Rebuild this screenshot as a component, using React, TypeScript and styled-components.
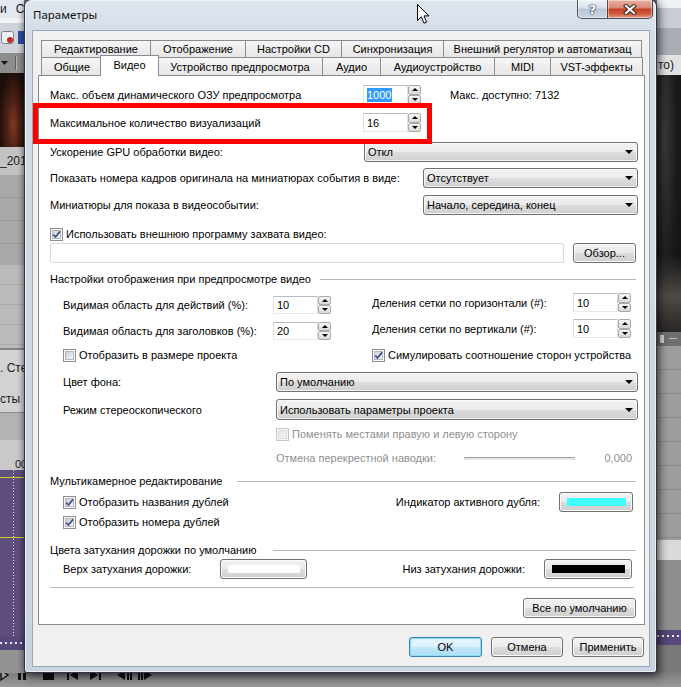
import React from "react";
import styled, { createGlobalStyle, css } from "styled-components";

const GlobalStyle = createGlobalStyle`
  html, body { margin: 0; padding: 0; }
  body { background: #7a7a7a; font-family: "Liberation Sans", Arial, sans-serif; }
`;

/* ---------- desktop / background application ---------- */

const Desktop = styled.div`
  position: relative;
  width: 681px;
  height: 687px;
  overflow: hidden;
  display: flex;
  flex-direction: column;
  background: #8a8a8a;
`;

const AppArea = styled.div`
  height: 673px;
  flex: none;
  display: flex;
`;

const Strip = styled.div<{ $w: number }>`
  width: ${(p) => p.$w}px;
  flex: none;
  display: flex;
  flex-direction: column;
`;

const Filler = styled.div`
  flex: 1;
  background: #777;
`;

const Band = styled.div<{ $h: number; $bg: string; $pl?: number; $end?: boolean }>`
  height: ${(p) => p.$h}px;
  flex: none;
  background: ${(p) => p.$bg};
  color: #1a1a1a;
  font-size: 12px;
  display: flex;
  align-items: ${(p) => (p.$end ? "flex-end" : "center")};
  gap: 9px;
  padding-left: ${(p) => p.$pl ?? 0}px;
  white-space: nowrap;
`;

const BottomBar = styled.div`
  flex: 1;
  background: linear-gradient(#7e7e7e, #9a9a9a);
  display: flex;
  align-items: flex-start;
`;

/* ---------- window ---------- */

const Window = styled.div`
  position: absolute;
  left: 24px;
  top: -1px;
  width: 633px;
  height: 674px;
  box-sizing: border-box;
  border: 1px solid rgba(28, 38, 54, 0.9);
  border-radius: 7px 7px 3px 3px;
  background: linear-gradient(180deg, #dfe6ee 0%, #d2dbe6 40px, #c9d4e0 100%);
  box-shadow: 0 0 6px rgba(0, 0, 0, 0.45), 3px 4px 10px rgba(0, 0, 0, 0.45),
    inset 0 0 0 1px rgba(255, 255, 255, 0.6);
  display: flex;
  flex-direction: column;
  z-index: 5;
`;

const TitleBar = styled.div`
  height: 30px;
  flex: none;
  display: flex;
  align-items: flex-start;
`;

const Title = styled.div`
  margin-left: 8px;
  line-height: 29px;
  font-family: "Noto Sans", "Open Sans", sans-serif;
  font-size: 11.5px;
  color: #111;
`;

const Caption = styled.div`
  margin-left: auto;
  margin-right: 3px;
  display: flex;
  height: 19px;
`;

const CapBtn = styled.div<{ $kind: "help" | "close" }>`
  box-sizing: border-box;
  height: 19px;
  border: 1px solid rgba(40, 50, 70, 0.8);
  border-top: none;
  display: flex;
  align-items: center;
  justify-content: center;
  box-shadow: inset 0 0 0 1px rgba(255, 255, 255, 0.45);
  ${(p) =>
    p.$kind === "help"
      ? css`
          width: 30px;
          border-right: none;
          border-radius: 0 0 0 5px;
          background: linear-gradient(#eef2f7 0%, #d7dfe9 45%, #b6c4d4 52%, #cbd7e4 100%);
        `
      : css`
          width: 46px;
          border-radius: 0 0 5px 0;
          background: linear-gradient(#eab0a2 0%, #da8b75 42%, #c63f24 52%, #cf5c40 78%, #e29d88 100%);
        `}
`;

const HelpGlyph = styled.span`
  font-family: "DejaVu Sans", sans-serif;
  font-weight: bold;
  font-size: 13px;
  color: #fff;
  text-shadow: 0 0 1px #2b3850, 0 0 1px #2b3850, 0 0 2px #2b3850;
`;

const Client = styled.div`
  flex: 1;
  margin: 0 6px 5px 7px;
  border: 1px solid #9aa8b8;
  background: #f0f0f0;
  display: flex;
  flex-direction: column;
`;

/* ---------- tabs ---------- */

const TabArea = styled.div`
  margin: 9px 0 0 8px;
  display: flex;
  flex-direction: column;
  position: relative;
  z-index: 2;
`;

const TabRow = styled.div<{ $h: number }>`
  display: flex;
  height: ${(p) => p.$h}px;
`;

const Tab = styled.div<{ $w: number; $active?: boolean; $last?: boolean }>`
  box-sizing: border-box;
  flex: none;
  width: ${(p) => p.$w}px;
  height: 100%;
  border: 1px solid #898c95;
  border-bottom: none;
  border-right: ${(p) => (p.$last ? "1px solid #898c95" : "none")};
  background: linear-gradient(#f6f6f6, #e6e6e6);
  display: flex;
  align-items: center;
  justify-content: center;
  font-size: 11px;
  color: #000;
  white-space: nowrap;
  overflow: hidden;
  ${(p) =>
    p.$active &&
    css`
      width: ${p.$w + 4}px;
      height: calc(100% + 3px);
      margin: -2px -2px 0;
      border-right: 1px solid #898c95;
      background: #fff;
      padding-bottom: 2px;
      position: relative;
      z-index: 3;
    `}
`;

const Panel = styled.div`
  margin: 0 4px 0 5px;
  border: 1px solid #898c95;
  background: #fff;
  padding: 0 6px 6px 11px;
  display: flex;
  flex-direction: column;
  font-size: 11px;
  color: #000;
`;

/* ---------- form parts ---------- */

const Row = styled.div<{ $mt: number; $h: number; $pl?: number; $pr?: number; $end?: boolean }>`
  display: flex;
  align-items: center;
  flex: none;
  margin-top: ${(p) => p.$mt}px;
  height: ${(p) => p.$h}px;
  padding-left: ${(p) => p.$pl ?? 0}px;
  padding-right: ${(p) => p.$pr ?? 0}px;
  justify-content: ${(p) => (p.$end ? "flex-end" : "flex-start")};
`;

const Cols = styled.div<{ $mt: number }>`
  display: flex;
  margin-top: ${(p) => p.$mt}px;
`;

const Col = styled.div<{ $w?: number; $pt?: number; $pl?: number }>`
  display: flex;
  flex-direction: column;
  ${(p) => (p.$w ? `width: ${p.$w}px; flex: none;` : "flex: 1;")}
  padding-top: ${(p) => p.$pt ?? 0}px;
  padding-left: ${(p) => p.$pl ?? 0}px;
  box-sizing: border-box;
`;

const Label = styled.span<{ $w?: number; $dim?: boolean; $ml?: number; $grow?: boolean; $right?: boolean; $pr?: number }>`
  flex: ${(p) => (p.$grow ? "1" : "none")};
  ${(p) => (p.$w !== undefined ? `width: ${p.$w}px;` : "")}
  margin-left: ${(p) => p.$ml ?? 0}px;
  padding-right: ${(p) => p.$pr ?? 0}px;
  text-align: ${(p) => (p.$right ? "right" : "left")};
  color: ${(p) => (p.$dim ? "#8f8f8f" : "#000")};
  white-space: nowrap;
  overflow: hidden;
`;

const Spacer = styled.span`
  flex: 1;
`;

const SpinWrap = styled.div`
  display: flex;
  height: 100%;
  flex: none;
`;

const NumBox = styled.div`
  width: 45px;
  box-sizing: border-box;
  border: 1px solid;
  border-color: #b5bcc7 #dde1e7 #e3e9ef #dde1e7;
  background: #fff;
  display: flex;
  align-items: center;
  padding-left: 3px;
`;

const Selected = styled.span`
  background: #3399ff;
  color: #fff;
  padding: 1px 1px 1px 0;
`;

const Spin = styled.div`
  width: 13px;
  display: flex;
  flex-direction: column;
`;

const SpinBtn = styled.div<{ $dir: "up" | "down" }>`
  flex: 1;
  box-sizing: border-box;
  border: 1px solid #a9a9a9;
  border-radius: 2px;
  background: linear-gradient(#f6f6f6, #d9d9d9);
  display: flex;
  align-items: center;
  justify-content: center;
  &::after {
    content: "";
    border-left: 3px solid transparent;
    border-right: 3px solid transparent;
    ${(p) => (p.$dir === "up" ? "border-bottom: 3px solid #000;" : "border-top: 3px solid #000;")}
  }
`;

const Combo = styled.div`
  flex: 1;
  height: 100%;
  box-sizing: border-box;
  border: 1px solid #707070;
  border-radius: 3px;
  background: linear-gradient(#f2f2f2 0%, #ebebeb 50%, #dddddd 50%, #cfcfcf 100%);
  box-shadow: inset 0 0 0 1px rgba(255, 255, 255, 0.75);
  display: flex;
  align-items: center;
  padding: 0 4px 0 3px;
  white-space: nowrap;
  &::after {
    content: "";
    margin-left: auto;
    border-left: 4px solid transparent;
    border-right: 4px solid transparent;
    border-top: 4px solid #000;
  }
`;

const PathBox = styled.div`
  flex: 1;
  height: 100%;
  box-sizing: border-box;
  border: 1px solid #d6dadf;
  border-radius: 2px;
  background: #fff;
`;

const Btn = styled.div<{ $w: number; $primary?: boolean; $ml?: number }>`
  width: ${(p) => p.$w}px;
  height: 100%;
  flex: none;
  margin-left: ${(p) => p.$ml ?? 0}px;
  box-sizing: border-box;
  border: 1px solid #707070;
  border-radius: 3px;
  background: linear-gradient(#f2f2f2 0%, #ebebeb 50%, #dddddd 50%, #cfcfcf 100%);
  box-shadow: inset 0 0 0 1px #fbfbfb;
  display: flex;
  align-items: center;
  justify-content: center;
  font-size: 11px;
  color: #000;
  white-space: nowrap;
  ${(p) =>
    p.$primary &&
    css`
      border-color: #3c7fb1;
      background: linear-gradient(#e9f5fc 0%, #dbf0fb 50%, #c2e6f9 50%, #acdcf5 100%);
      box-shadow: inset 0 0 0 1px #8fdcf8, inset 0 0 2px 1px #c8eefc;
    `}
`;

const ColorBtn = styled(Btn)`
  padding: 5px 6px 5px 7px;
  align-items: stretch;
`;

const Swatch = styled.span<{ $c: string }>`
  flex: 1;
  background: ${(p) => p.$c};
`;

const SectionRule = styled.span`
  flex: 1;
  height: 1px;
  background: #b4b9bf;
  margin-right: 2px;
`;

const CheckBox = styled.span<{ $disabled?: boolean }>`
  width: 13px;
  height: 13px;
  flex: none;
  box-sizing: border-box;
  border: 1px solid ${(p) => (p.$disabled ? "#c8c8c8" : "#8e8f8f")};
  background: #f8f8f8;
  display: flex;
  margin-right: 3px;
`;

const Track = styled.span`
  width: 111px;
  height: 3px;
  flex: none;
  box-sizing: border-box;
  border: 1px solid;
  border-color: #a0a0a0 #c8c8c8 #e6e6e6 #c8c8c8;
  background: #e9e9e9;
`;

const ButtonBar = styled.div`
  display: flex;
  justify-content: flex-end;
  gap: 9px;
  height: 20px;
  margin: 12px 5px 0 0;
`;

const Overlay = styled.div`
  position: absolute;
  left: 33px;
  top: 103px;
  width: 399px;
  height: 41px;
  box-sizing: border-box;
  border: 5px solid #ff0000;
  z-index: 10;
`;

const Cursor = styled.svg`
  position: absolute;
  left: 417px;
  top: 4px;
  z-index: 11;
`;

/* ---------- small composed pieces ---------- */

function Check({ on, disabled }: { on?: boolean; disabled?: boolean }) {
  const id = disabled ? "cbd" : "cbg";
  return (
    <CheckBox $disabled={disabled}>
      <svg width="11" height="11" viewBox="0 0 11 11">
        <defs>
          <linearGradient id={id} x1="0" y1="0" x2="1" y2="1">
            <stop offset="0" stopColor={disabled ? "#e6e6e6" : "#c9cdd3"} />
            <stop offset="1" stopColor={disabled ? "#f6f6f6" : "#f7f7f7"} />
          </linearGradient>
        </defs>
        <rect x="1.5" y="1.5" width="8" height="8" fill={`url(#${id})`} stroke={disabled ? "#dadada" : "#b3b8be"} />
        {on && (
          <path d="M2.3 5.6 L4.5 8 L9 2.4" fill="none" stroke="#3f4f8e" strokeWidth="1.7" strokeLinejoin="round" />
        )}
      </svg>
    </CheckBox>
  );
}

function SpinField({ children }: { children: React.ReactNode }) {
  return (
    <SpinWrap>
      <NumBox>{children}</NumBox>
      <Spin>
        <SpinBtn $dir="up" />
        <SpinBtn $dir="down" />
      </Spin>
    </SpinWrap>
  );
}

function Section({ mt, w, children }: { mt: number; w: number; children: React.ReactNode }) {
  return (
    <Row $mt={mt} $h={14}>
      <Label $w={w}>{children}</Label>
      <SectionRule />
    </Row>
  );
}

const tabsBack = [
  { t: "Редактирование", w: 109 },
  { t: "Отображение", w: 95 },
  { t: "Настройки CD", w: 96 },
  { t: "Синхронизация", w: 102 },
  { t: "Внешний регулятор и автоматизац", w: 199 },
];

const tabsFront = [
  { t: "Общие", w: 61 },
  { t: "Видео", w: 55, active: true },
  { t: "Устройство предпросмотра", w: 165 },
  { t: "Аудио", w: 58 },
  { t: "Аудиоустройство", w: 114 },
  { t: "MIDI", w: 56 },
  { t: "VST-эффекты", w: 93 },
];

const timeline =
  "linear-gradient(#d6cf2c,#d6cf2c) 0 7px/100% 1px no-repeat, linear-gradient(#d6cf2c,#d6cf2c) 0 67px/100% 1px no-repeat, repeating-linear-gradient(180deg,#e0e0e0 0 1px,transparent 1px 3px) 13px 0/1px 100% no-repeat, #5d4e7e";
const dots =
  "repeating-linear-gradient(90deg,#e8e8f0 0 2px,transparent 2px 5px) 0 5px/100% 2px no-repeat, #56487a";

export default function App() {
  return (
    <>
      <GlobalStyle />
      <Desktop>
        <AppArea>
          <Strip $w={24}>
            <Band $h={18} $bg="#e3e8f0">
              <span>и</span>
              <span>С</span>
            </Band>
            <Band $h={5} $bg="#f1f3f6" />
            <Band $h={30} $bg="#d0d4da" $pl={1}>
              <svg width="23" height="14" viewBox="0 0 23 14">
                <rect x="0.5" y="0.5" width="12" height="12" rx="2" fill="#eef0f3" stroke="#7b808a" />
                <circle cx="9" cy="9" r="3" fill="#c8261c" />
                <rect x="17" y="0" width="6" height="13" fill="#2f4fa6" />
              </svg>
            </Band>
            <Band $h={20} $bg="#8d8d8d" $pl={1}>
              <svg width="20" height="14" viewBox="0 0 20 14">
                <path d="M0 5 L7 5 L3.5 9 Z" fill="#151515" />
                <rect x="14" y="0" width="1" height="14" fill="#5e5e5e" />
                <rect x="15" y="0" width="1" height="14" fill="#b5b5b5" />
              </svg>
            </Band>
            <Band
              $h={74}
              $bg="radial-gradient(ellipse at 55% 70%, #7c3a22 0%, #4c2014 35%, #1d0f0a 75%)"
            />
            <Band $h={28} $bg="#c3c3c3">
              <span>_201</span>
            </Band>
            <Band $h={90} $bg="repeating-linear-gradient(180deg,#a9a9a9 0 22px,#9a9a9a 22px 23px)" />
            <Band $h={83} $bg="repeating-linear-gradient(180deg,#bababa 0 19px,#aaaaaa 19px 20px)" />
            <Band $h={2} $bg="#858585" />
            <Band $h={36} $bg="#d2d2d2">
              <span>. Сте</span>
            </Band>
            <Band $h={26} $bg="#d2d2d2">
              <span>сты</span>
            </Band>
            <Band $h={1} $bg="#8a8a8a" />
            <Band $h={27} $bg="#b3b3b3" />
            <Band $h={30} $bg="#c9c9c9" $end $pl={15}>
              <span style={{ fontSize: 11 }}>00</span>
            </Band>
            <Band $h={167} $bg={timeline} />
            <Band $h={13} $bg={dots} />
            <Band $h={23} $bg="#939393" />
          </Strip>
          <Filler />
          <Strip $w={24}>
            <Band $h={8} $bg="#eef1f5" />
            <Band $h={20} $bg="#c9ced6" />
            <Band $h={27} $bg="#a9aeb5" />
            <Band $h={20} $bg="#e2e2e2" $pl={1}>
              <span>то)</span>
            </Band>
            <Band
              $h={257}
              $bg="linear-gradient(180deg, transparent 70%, #4f4a45 86%, #2a2624 100%), radial-gradient(ellipse at 30% 25%, #3b3b3b 0%, #1b1b1b 50%, #0f0f0f 100%)"
            />
            <Band $h={14} $bg="#6f6f6f" $pl={3}>
              <svg width="20" height="10" viewBox="0 0 20 10">
                <rect x="0" y="1" width="4" height="8" fill="#d8d8d8" />
                <rect x="9" y="4" width="8" height="1" fill="#bcbcbc" />
              </svg>
            </Band>
            <Band $h={194} $bg="repeating-linear-gradient(180deg,#9d9d9d 0 23px,#8b8b8b 23px 24px)" />
            <Band $h={20} $bg="#dadada" />
            <Band $h={70} $bg="#8e8e8e" />
            <Band $h={15} $bg={dots} />
            <Band $h={28} $bg="#7a7a7a" />
          </Strip>
        </AppArea>
        <BottomBar>
          <svg width="160" height="12" viewBox="0 0 160 12">
            <path d="M1 -3 L8 2 L1 7 Z" fill="#9a9a9a" stroke="#111" strokeWidth="1.4" />
            <rect x="18" y="-3" width="3" height="10" fill="#111" />
            <rect x="23" y="-3" width="3" height="10" fill="#111" />
            <rect x="43" y="-3" width="11" height="10" fill="#111" />
            <rect x="67" y="-3" width="2" height="10" fill="#111" />
            <path d="M78 -3 L70 2 L78 7 Z" fill="#111" />
            <path d="M90 -3 L98 2 L90 7 Z" fill="#111" />
            <rect x="99" y="-3" width="2" height="10" fill="#111" />
            <path d="M125 -3 L117 2 L125 7 Z" fill="#111" />
            <rect x="127" y="-3" width="2" height="10" fill="#111" />
            <rect x="130" y="-3" width="2" height="10" fill="#111" />
            <rect x="138" y="-3" width="2" height="10" fill="#111" />
            <rect x="141" y="-3" width="2" height="10" fill="#111" />
            <path d="M144 -3 L152 2 L144 7 Z" fill="#111" />
          </svg>
        </BottomBar>

        <Window>
          <TitleBar>
            <Title>Параметры</Title>
            <Caption>
              <CapBtn $kind="help">
                <HelpGlyph>?</HelpGlyph>
              </CapBtn>
              <CapBtn $kind="close">
                <svg width="14" height="11" viewBox="0 0 14 11">
                  <path d="M3 2 L11 9 M11 2 L3 9" stroke="#3b2623" strokeWidth="4.2" strokeLinecap="square" />
                  <path d="M3 2 L11 9 M11 2 L3 9" stroke="#ffffff" strokeWidth="2.2" strokeLinecap="square" />
                </svg>
              </CapBtn>
            </Caption>
          </TitleBar>

          <Client>
            <TabArea>
              <TabRow $h={17}>
                {tabsBack.map((t, i) => (
                  <Tab key={t.t} $w={t.w} $last={i === tabsBack.length - 1}>
                    {t.t}
                  </Tab>
                ))}
              </TabRow>
              <TabRow $h={18}>
                {tabsFront.map((t, i) => (
                  <Tab key={t.t} $w={t.w} $active={t.active} $last={i === tabsFront.length - 1}>
                    {t.t}
                  </Tab>
                ))}
              </TabRow>
            </TabArea>

            <Panel>
              <Row $mt={9} $h={19}>
                <Label $w={313}>Макс. объем динамического ОЗУ предпросмотра</Label>
                <SpinField>
                  <Selected>1000</Selected>
                </SpinField>
                <Label $ml={29}>Макс. доступно: 7132</Label>
              </Row>
              <Row $mt={9} $h={19}>
                <Label $w={313}>Максимальное количество визуализаций</Label>
                <SpinField>16</SpinField>
              </Row>
              <Row $mt={10} $h={20}>
                <Label $w={314}>Ускорение GPU обработки видео:</Label>
                <Combo>Откл</Combo>
              </Row>
              <Row $mt={6} $h={20}>
                <Label $w={373}>Показать номера кадров оригинала на миниатюрах события в виде:</Label>
                <Combo>Отсутствует</Combo>
              </Row>
              <Row $mt={7} $h={20}>
                <Label $w={373}>Миниатюры для показа в видеособытии:</Label>
                <Combo>Начало, середина, конец</Combo>
              </Row>
              <Row $mt={12} $h={14}>
                <Check on />
                <Label>Использовать внешнюю программу захвата видео:</Label>
              </Row>
              <Row $mt={2} $h={20} $pr={2}>
                <PathBox />
                <Btn $w={63} $ml={9}>
                  Обзор...
                </Btn>
              </Row>

              <Section mt={9} w={270}>
                Настройки отображения при предпросмотре видео
              </Section>

              <Cols $mt={7}>
                <Col $w={322} $pt={3} $pl={13}>
                  <Row $mt={0} $h={18}>
                    <Label $w={210}>Видимая область для действий (%):</Label>
                    <SpinField>10</SpinField>
                  </Row>
                  <Row $mt={8} $h={18}>
                    <Label $w={210}>Видимая область для заголовков (%):</Label>
                    <SpinField>20</SpinField>
                  </Row>
                  <Row $mt={8} $h={14}>
                    <Check />
                    <Label>Отобразить в размере проекта</Label>
                  </Row>
                </Col>
                <Col>
                  <Row $mt={0} $h={19}>
                    <Label $w={201}>Деления сетки по горизонтали (#):</Label>
                    <SpinField>10</SpinField>
                  </Row>
                  <Row $mt={7} $h={19}>
                    <Label $w={201}>Деления сетки по вертикали (#):</Label>
                    <SpinField>10</SpinField>
                  </Row>
                  <Row $mt={10} $h={14}>
                    <Check on />
                    <Label>Симулировать соотношение сторон устройства</Label>
                  </Row>
                </Col>
              </Cols>

              <Row $mt={10} $h={20} $pl={13}>
                <Label $w={213}>Цвет фона:</Label>
                <Combo>По умолчанию</Combo>
              </Row>
              <Row $mt={7} $h={21} $pl={13}>
                <Label $w={213}>Режим стереоскопического</Label>
                <Combo>Использовать параметры проекта</Combo>
              </Row>
              <Row $mt={7} $h={14} $pl={226}>
                <Check disabled />
                <Label $dim>Поменять местами правую и левую сторону</Label>
              </Row>
              <Row $mt={10} $h={14} $pl={226}>
                <Label $w={188} $dim>
                  Отмена перекрестной наводки:
                </Label>
                <Track />
                <Label $grow $right $dim $pr={6}>
                  0,000
                </Label>
              </Row>

              <Section mt={9} w={187}>
                Мультикамерное редактирование
              </Section>
              <Row $mt={4} $h={20} $pl={13} $pr={5}>
                <Check on />
                <Label>Отобразить названия дублей</Label>
                <Spacer />
                <Label>Индикатор активного дубля:</Label>
                <ColorBtn $w={74} $ml={19}>
                  <Swatch $c="#40ffff" />
                </ColorBtn>
              </Row>
              <Row $mt={3} $h={14} $pl={13}>
                <Check on />
                <Label>Отобразить номера дублей</Label>
              </Row>

              <Section mt={14} w={223}>
                Цвета затухания дорожки по умолчанию
              </Section>
              <Row $mt={2} $h={20} $pl={13} $pr={6}>
                <Label $w={157}>Верх затухания дорожки:</Label>
                <ColorBtn $w={87}>
                  <Swatch $c="#ffffff" />
                </ColorBtn>
                <Spacer />
                <Label>Низ затухания дорожки:</Label>
                <ColorBtn $w={88} $ml={19}>
                  <Swatch $c="#000000" />
                </ColorBtn>
              </Row>
              <Row $mt={8} $h={1} $pr={2}>
                <SectionRule />
              </Row>
              <Row $mt={10} $h={20} $pr={2} $end>
                <Btn $w={113}>Все по умолчанию</Btn>
              </Row>
            </Panel>

            <ButtonBar>
              <Btn $w={73} $primary>
                OK
              </Btn>
              <Btn $w={72}>Отмена</Btn>
              <Btn $w={72}>Применить</Btn>
            </ButtonBar>
          </Client>
        </Window>

        <Overlay />
        <Cursor width="13" height="21" viewBox="0 0 13 21">
          <path
            d="M0.5 0.5 L0.5 16.5 L4.3 12.8 L7 19.2 L9.6 18.1 L7 11.9 L12 11.9 Z"
            fill="#ffffff"
            stroke="#000000"
            strokeWidth="1"
            strokeLinejoin="miter"
          />
        </Cursor>
      </Desktop>
    </>
  );
}
